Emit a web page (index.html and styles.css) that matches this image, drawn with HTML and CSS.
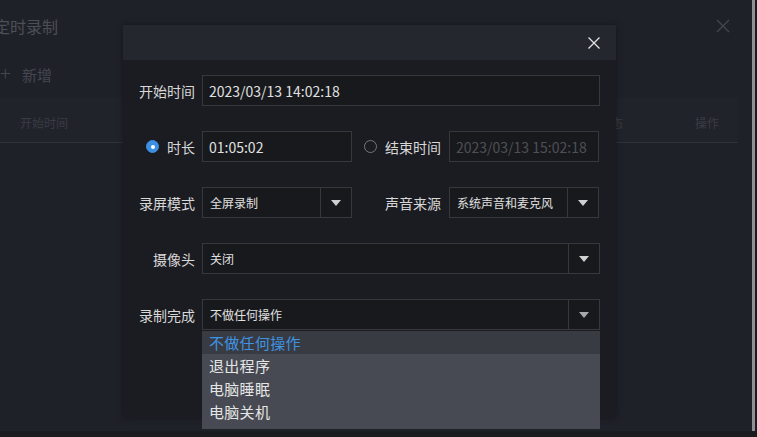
FILE: index.html
```html
<!DOCTYPE html>
<html lang="zh-CN">
<head>
    <meta charset="UTF-8">
    <meta name="viewport" content="width=device-width, initial-scale=1.0">
    <title>定时录制</title>
    <link rel="stylesheet" href="styles.css">
</head>
<body>
    <div class="screen">
        <!-- background window (dimmed) -->
        <div class="window">
            <div class="window-head">
                <span class="window-title">定时录制</span>
                <svg class="window-close" width="14" height="14" viewBox="0 0 14 14"><path d="M1 1L13 13M13 1L1 13" stroke="#44464d" stroke-width="1.4"/></svg>
            </div>
            <div class="toolbar"><span class="plus">+</span> 新增</div>
            <div class="table-head">
                <span class="col-start">开始时间</span>
                <span class="col-state">状态</span>
                <span class="col-op">操作</span>
            </div>
        </div>

        <!-- modal -->
        <div class="modal">
            <div class="modal-head">
                <svg class="modal-close" width="12" height="12" viewBox="0 0 12 12"><path d="M0.5 0.5L11.5 11.5M11.5 0.5L0.5 11.5" stroke="#e2e2e2" stroke-width="1.3"/></svg>
            </div>
            <div class="modal-body">
                <div class="row">
                    <label class="label">开始时间</label>
                    <div class="input wide">2023/03/13 14:02:18</div>
                </div>
                <div class="row">
                    <label class="label radio-label"><span class="radio checked"></span>时长</label>
                    <div class="input half">01:05:02</div>
                    <label class="label second radio-label"><span class="radio"></span>结束时间</label>
                    <div class="input half disabled">2023/03/13 15:02:18</div>
                </div>
                <div class="row">
                    <label class="label">录屏模式</label>
                    <div class="select half"><span class="value">全屏录制</span><span class="arrow"></span></div>
                    <label class="label second">声音来源</label>
                    <div class="select half"><span class="value">系统声音和麦克风</span><span class="arrow"></span></div>
                </div>
                <div class="row">
                    <label class="label">摄像头</label>
                    <div class="select wide"><span class="value">关闭</span><span class="arrow"></span></div>
                </div>
                <div class="row">
                    <label class="label">录制完成</label>
                    <div class="select wide open">
                        <span class="value">不做任何操作</span><span class="arrow"></span>
                        <ul class="dropdown">
                            <li class="active">不做任何操作</li>
                            <li>退出程序</li>
                            <li>电脑睡眠</li>
                            <li>电脑关机</li>
                        </ul>
                    </div>
                </div>
            </div>
        </div>
    </div>
</body>
</html>
```

FILE: styles.css
```css
* {
    margin: 0;
    padding: 0;
    box-sizing: border-box;
}

body {
    background-color: #191b20;
    font-family: "Noto Sans CJK SC", "Microsoft YaHei", sans-serif;
    color: #dcdcdc;
}

.screen {
    position: relative;
    width: 757px;
    height: 437px;
    overflow: hidden;
    background-color: #191b20;
}

/* Background window */
.window {
    width: 755px;
    height: 431px;
    background-color: #1f2129;
    border-right: 3px solid #8e9094;
}

.window-head {
    display: flex;
    align-items: center;
    justify-content: space-between;
    height: 52px;
    padding-right: 22px;
}

.window-title {
    margin-left: -6px;
    font-size: 16px;
    color: #4d4f56;
}

.toolbar {
    height: 45px;
    padding-top: 6px;
    font-size: 15px;
    color: #45474e;
}

.toolbar .plus {
    font-size: 20px;
    margin-right: 8px;
    font-weight: 300;
}

.table-head {
    display: flex;
    align-items: center;
    width: 738px;
    height: 46px;
    padding-top: 6px;
    background-color: #21232b;
    border-bottom: 1px solid #30323a;
    font-size: 12px;
    color: #3a3c43;
}

.col-start {
    padding-left: 20px;
    flex: 1;
}

.col-state {
    width: 96px;
}

.col-op {
    width: 43px;
}

/* Modal */
.modal {
    position: absolute;
    left: 123px;
    top: 25px;
    width: 493px;
    height: 393px;
    background-color: #1b1c21;
    box-shadow: 0 0 6px rgba(0, 0, 0, 0.35);
}

.modal-head {
    display: flex;
    align-items: center;
    justify-content: flex-end;
    height: 35px;
    padding-right: 16px;
    background-color: #25272e;
}

.modal-body {
    display: flex;
    flex-direction: column;
    gap: 25px;
    padding: 15px 16px 0 16px;
}

.row {
    display: flex;
    align-items: center;
    height: 31px;
}

.label {
    display: flex;
    align-items: center;
    justify-content: flex-end;
    width: 56px;
    margin-right: 7px;
    font-size: 14px;
    color: #d8d8d8;
    white-space: nowrap;
}

.label.second {
    width: 89px;
    margin-right: 8px;
}

.radio {
    display: inline-block;
    width: 13px;
    height: 13px;
    border-radius: 50%;
    border: 1px solid #75777c;
    margin-right: 8px;
    flex-shrink: 0;
}

.radio.checked {
    background-color: #3c8fe3;
    border-color: #3c8fe3;
    position: relative;
}

.radio.checked::after {
    content: "";
    position: absolute;
    left: 3.5px;
    top: 3.5px;
    width: 4px;
    height: 4px;
    border-radius: 50%;
    background-color: #fff;
}

.input,
.select {
    display: flex;
    align-items: center;
    height: 31px;
    background-color: #18191d;
    border: 1px solid #36383e;
    color: #e0e0e0;
}

.input {
    padding-left: 6px;
    font-size: 14px;
}

.input.disabled {
    color: #4e5055;
}

.wide {
    width: 398px;
}

.half {
    width: 150px;
}

.select {
    position: relative;
    font-size: 12px;
}

.select .value {
    flex: 1;
    padding-left: 7px;
    white-space: nowrap;
}

.select .arrow {
    display: flex;
    align-items: center;
    justify-content: center;
    width: 31px;
    height: 100%;
    border-left: 1px solid #36383e;
}

.select .arrow::after {
    content: "";
    border-left: 5px solid transparent;
    border-right: 5px solid transparent;
    border-top: 6px solid #d0d0d0;
}

.select.open .arrow::after {
    border-top-color: #a8a9ac;
}

/* Dropdown list */
.dropdown {
    position: absolute;
    left: -1px;
    top: 31px;
    width: 398px;
    padding-bottom: 6px;
    list-style: none;
    background-color: #474a52;
    z-index: 5;
}

.dropdown li {
    height: 23px;
    line-height: 23px;
    padding-left: 7px;
    font-size: 15px;
    letter-spacing: 0.3px;
    color: #e6e6e6;
}

.dropdown li.active {
    background-color: #383b42;
    color: #3f93e2;
}
```
